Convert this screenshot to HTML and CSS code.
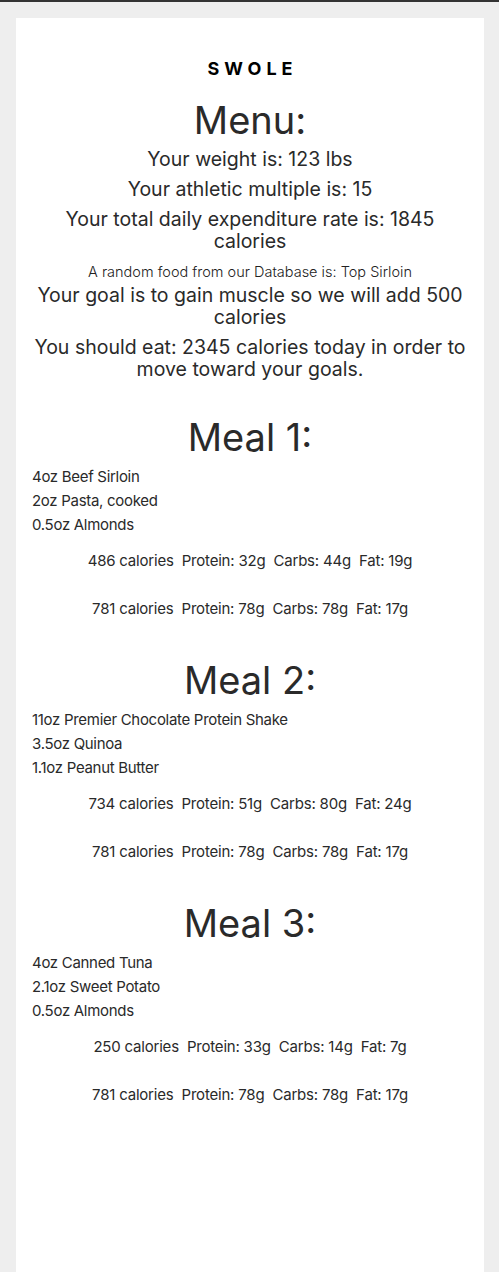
FILE: index.html
```html
<!DOCTYPE html>
<html>
<head>
<meta charset="utf-8">
<link rel="stylesheet" href="styles.css">
</head>
<body>
<div class="topbar"></div>
<main class="card">
  <div class="brand">SWOLE</div>
  <h1 class="title">Menu:</h1>
  <p class="stat">Your weight is: 123 lbs</p>
  <p class="stat">Your athletic multiple is: 15</p>
  <p class="stat">Your total daily expenditure rate is: 1845 calories</p>
  <p class="random">A random food from our Database is: Top Sirloin</p>
  <p class="stat">Your goal is to gain muscle so we will add 500 calories</p>
  <p class="stat">You should eat: 2345 calories today in order to move toward your goals.</p>

  <section class="meal">
    <h2 class="meal-title">Meal 1:</h2>
    <ul class="items">
      <li>4oz Beef Sirloin</li>
      <li>2oz Pasta, cooked</li>
      <li>0.5oz Almonds</li>
    </ul>
    <p class="macros">486 calories&nbsp; Protein: 32g&nbsp; Carbs: 44g&nbsp; Fat: 19g</p>
    <p class="macros">781 calories&nbsp; Protein: 78g&nbsp; Carbs: 78g&nbsp; Fat: 17g</p>
  </section>

  <section class="meal">
    <h2 class="meal-title">Meal 2:</h2>
    <ul class="items">
      <li>11oz Premier Chocolate Protein Shake</li>
      <li>3.5oz Quinoa</li>
      <li>1.1oz Peanut Butter</li>
    </ul>
    <p class="macros">734 calories&nbsp; Protein: 51g&nbsp; Carbs: 80g&nbsp; Fat: 24g</p>
    <p class="macros">781 calories&nbsp; Protein: 78g&nbsp; Carbs: 78g&nbsp; Fat: 17g</p>
  </section>

  <section class="meal">
    <h2 class="meal-title">Meal 3:</h2>
    <ul class="items">
      <li>4oz Canned Tuna</li>
      <li>2.1oz Sweet Potato</li>
      <li>0.5oz Almonds</li>
    </ul>
    <p class="macros">250 calories&nbsp; Protein: 33g&nbsp; Carbs: 14g&nbsp; Fat: 7g</p>
    <p class="macros">781 calories&nbsp; Protein: 78g&nbsp; Carbs: 78g&nbsp; Fat: 17g</p>
  </section>
</main>
</body>
</html>
```

FILE: styles.css
```css
html, body {
  margin: 0;
  padding: 0;
}
body {
  background: #eeeeee;
  font-family: Inter, "Noto Sans", sans-serif;
  color: #2a2a2a;
  min-height: 1272px;
  display: flex;
  flex-direction: column;
}
.topbar {
  height: 2px;
  background: #333333;
}
.card {
  flex: 1;
  background: #ffffff;
  margin: 16px 15px 0 16px;
  padding: 40px 16px 40px 16px;
  text-align: center;
}
.brand {
  font-family: Inter, sans-serif;
  font-weight: 700;
  font-size: 18px;
  letter-spacing: 5px;
  padding-left: 5px;
  color: #000;
  line-height: 22px;
  margin: 0 0 18px;
}
.title {
  font-weight: 400;
  font-size: 38px;
  line-height: 44px;
  margin: 0 0 6px;
}
.stat {
  font-size: 19.5px;
  line-height: 22px;
  margin: 0 0 8px;
}
.random {
  font-size: 14.5px;
  font-weight: 300;
  line-height: 24px;
  margin: 0;
  color: #222;
}
.meal {
  margin-top: 35px;
}
.meal + .meal {
  margin-top: 37px;
}
.meal-title {
  font-weight: 400;
  font-size: 38px;
  line-height: 44px;
  margin: 0 0 6px;
}
.items {
  list-style: none;
  padding: 0;
  margin: 0;
  text-align: left;
}
.items li {
  font-size: 15px;
  font-weight: 400;
  letter-spacing: -0.3px;
  line-height: 24px;
  color: #2a2a2a;
}
.macros {
  font-size: 15px;
  font-weight: 400;
  letter-spacing: -0.2px;
  line-height: 24px;
  margin: 12px 0 0;
}
.macros + .macros {
  margin-top: 24px;
}
```
